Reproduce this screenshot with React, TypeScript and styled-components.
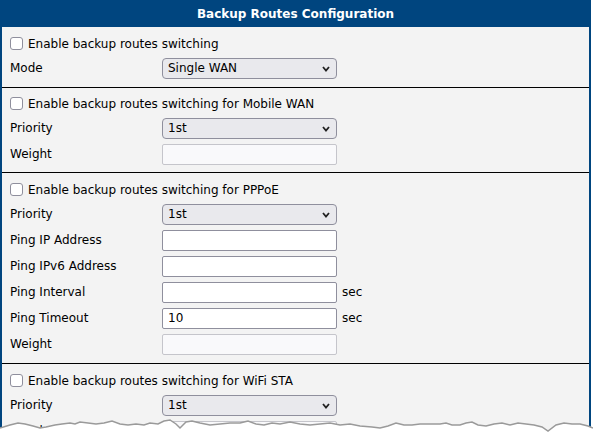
import React from "react"
import styled, { createGlobalStyle } from "styled-components"

const GlobalStyle = createGlobalStyle`
    html, body {
        margin: 0;
        padding: 0;
        background: #fff;
    }
    body {
        font-family: "DejaVu Sans", Verdana, sans-serif;
        font-size: 12px;
        color: #000;
    }
`

const Page = styled.div`
    position: relative;
    width: 593px;
    height: 435px;
    overflow: hidden;
`

const Frame = styled.div`
    width: 587px;
    border-left: 2px solid #00457f;
    border-right: 2px solid #00457f;
    background: #f3f3f3;
`

const Title = styled.div`
    height: 27px;
    margin: 0 -2px;
    background: #00457f;
    color: #fff;
    font-weight: bold;
    font-size: 12px;
    display: flex;
    align-items: center;
    justify-content: center;
`

// the mobile section sits a little tighter than the others
const Section = styled.div<{ $tight?: boolean }>`
    padding: ${p => (p.$tight ? "4px 0 5px" : "5px 0 6px")};
    border-bottom: 1px solid #000;
`

const CheckRow = styled.label`
    height: 23px;
    padding-left: 8px;
    display: flex;
    align-items: center;
    gap: 5px;
`

const Check = styled.input`
    width: 13px;
    height: 13px;
    margin: 0;
    appearance: none;
    background: #fff;
    border: 1px solid #8f8f9d;
    border-radius: 3px;
`

const Row = styled.div`
    height: 26px;
    padding-left: 8px;
    display: grid;
    grid-template-columns: 152px 175px auto;
    align-items: center;
`

const Label = styled.span``

const Unit = styled.span`
    padding-left: 5px;
`

const SelectBox = styled.div`
    position: relative;
    height: 21px;
`

const Select = styled.select`
    appearance: none;
    width: 100%;
    height: 21px;
    margin: 0;
    padding: 0 0 0 5px;
    font: inherit;
    color: #000;
    background: #e9e9ed;
    border: 1px solid #8f8f9d;
    border-radius: 4px;
`

const Chevron = styled.svg`
    position: absolute;
    right: 7px;
    top: 8px;
    pointer-events: none;
`

const Input = styled.input<{ $off?: boolean }>`
    box-sizing: border-box;
    width: 175px;
    height: 21px;
    margin: 0;
    padding: 0 5px;
    font: inherit;
    color: #000;
    background: ${p => (p.$off ? "#f9f9fb" : "#fff")};
    border: 1px solid ${p => (p.$off ? "#c5c5cb" : "#8f8f9d")};
    border-radius: 2px;
`

const Torn = styled.svg`
    position: absolute;
    left: 0;
    bottom: 0;
`

const tornEdge: [number, number][] = [
    [0, 428], [10, 425], [18, 423], [25, 424], [33, 426], [40, 428], [46, 427], [55, 425],
    [62, 424], [70, 423], [75, 424], [80, 422], [88, 423], [96, 424], [104, 423], [112, 421],
    [120, 424], [128, 425], [136, 424], [144, 425], [150, 423], [158, 424], [164, 421], [170, 420],
    [176, 424], [180, 428], [186, 422], [192, 421], [200, 423], [210, 425], [220, 424], [230, 423],
    [240, 423], [248, 421], [256, 424], [264, 425], [272, 423], [280, 424], [290, 422], [300, 424],
    [310, 425], [320, 424], [330, 423], [340, 425], [350, 424], [360, 426], [372, 427], [380, 428],
    [388, 426], [396, 423], [404, 425], [412, 425], [420, 424], [430, 424], [440, 424], [446, 423],
    [452, 425], [460, 425], [466, 423], [472, 422], [478, 425], [486, 426], [494, 424], [502, 423],
    [510, 425], [518, 423], [526, 424], [534, 425], [542, 427], [548, 431], [556, 425], [564, 423],
    [572, 424], [580, 424], [588, 426], [593, 428],
]

function Dropdown(props: { value: string }) {
    return (
        <SelectBox>
            <Select defaultValue={props.value}>
                <option>{props.value}</option>
            </Select>
            <Chevron width="8" height="6" viewBox="0 0 8 6">
                <path d="M1 1 L4 4.5 L7 1" fill="none" stroke="#222" strokeWidth="1.8" />
            </Chevron>
        </SelectBox>
    )
}

function Routes(props: { name?: string; ping?: boolean; tight?: boolean }) {
    const title = "Enable backup routes switching" + (props.name ? " for " + props.name : "")
    return (
        <Section $tight={props.tight}>
            <CheckRow>
                <Check type="checkbox" />
                {title}
            </CheckRow>
            <Row>
                <Label>Priority</Label>
                <Dropdown value="1st" />
            </Row>
            {props.ping && (
                <>
                    <Row><Label>Ping IP Address</Label><Input /></Row>
                    <Row><Label>Ping IPv6 Address</Label><Input /></Row>
                    <Row><Label>Ping Interval</Label><Input /><Unit>sec</Unit></Row>
                    <Row><Label>Ping Timeout</Label><Input defaultValue="10" /><Unit>sec</Unit></Row>
                </>
            )}
            <Row>
                <Label>Weight</Label>
                <Input $off disabled />
            </Row>
        </Section>
    )
}

export default function App() {
    const pts = tornEdge.map(p => p.join(",")).join(" ")
    return (
        <Page>
            <GlobalStyle />
            <Frame>
                <Title>Backup Routes Configuration</Title>
                <Section>
                    <CheckRow>
                        <Check type="checkbox" />
                        Enable backup routes switching
                    </CheckRow>
                    <Row>
                        <Label>Mode</Label>
                        <Dropdown value="Single WAN" />
                    </Row>
                </Section>
                <Routes name="Mobile WAN" tight />
                <Routes name="PPPoE" ping />
                <Routes name="WiFi STA" />
            </Frame>
            <Torn width="593" height="435" viewBox="0 0 593 435">
                <polygon points={pts + " 593,435 0,435"} fill="#fff" />
                <polyline points={pts} fill="none" stroke="#9a9a9a" strokeWidth="1.5" />
            </Torn>
        </Page>
    )
}
